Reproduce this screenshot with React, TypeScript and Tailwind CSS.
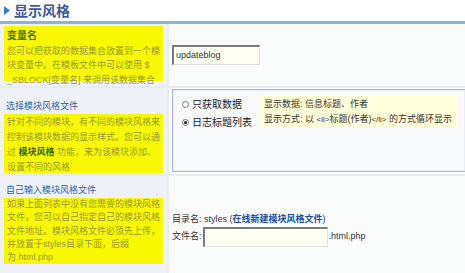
const FONT = '"Liberation Sans", "Noto Sans CJK SC", sans-serif';

export default function App() {
  return (
    <div
      className="h-[273px] w-[465px] overflow-hidden bg-white text-[9px]"
      style={{ fontFamily: FONT }}
    >
      <div className="flex h-[21px] items-center gap-[4px] pl-[4px]">
        <svg viewBox="0 0 6 9" className="h-[9px] w-[6px]" aria-hidden="true">
          <path d="M0 0 L6 4.5 L0 9 Z" fill="#3b7bd0" />
        </svg>
        <span className="text-[14px] font-bold leading-none text-[#3d5a96]">显示风格</span>
      </div>
      <div className="h-[3px] bg-[#88b6d6]" />

      <div className="grid grid-cols-[167px_1fr] gap-[2px] bg-[#e6ecf2]">
        {/* row 1 */}
        <LeftCell className="h-[62px] pt-[2px]">
          <div className="h-[55px] bg-[#f8f800] px-[3px] pt-[3px] leading-[14.5px] text-[#9a9a3e]">
            <p className="text-[10px] font-bold text-[#4f6f00]">变量名</p>
            <p>您可以把获取的数据集合放置到一个模</p>
            <p>块变量中。在模板文件中可以使用 $</p>
            <p>_SBLOCK[变量名] 来调用该数据集合</p>
          </div>
        </LeftCell>
        <RightCell className="flex h-[62px] items-center">
          <div className="flex h-[20px] w-[88px] items-center border-t-2 border-r border-b border-l-2 border-t-[#7a7a7a] border-r-[#e0e0e0] border-b-[#e0e0e0] border-l-[#7a7a7a] bg-[#fffff4] pl-[2px] text-[9px] text-[#333]">
            updateblog
          </div>
        </RightCell>

        {/* row 2 */}
        <LeftCell className="h-[86px]">
          <p className="pt-[12px] pl-[2px] leading-[13px] text-[#2d5fae]">选择模块风格文件</p>
          <div className="mt-[1px] h-[59px] bg-[#f8f800] px-[3px] pt-[1px] leading-[15px] text-[#9a9a3e]">
            <p>针对不同的模块，有不同的模块风格来</p>
            <p>控制该模块数据的显示样式。您可以通</p>
            <p>
              过 <b className="text-[#336600]">模块风格</b> 功能，来为该模块添加、
            </p>
            <p>设置不同的风格</p>
          </div>
        </LeftCell>
        <RightCell className="h-[86px] pt-[1px]">
          <div className="flex h-[83px] gap-[8px] border border-r-0 border-[#a9bacb] bg-[#f7f9fb] pt-[5px] pl-[9px] shadow-[inset_0_0_0_1px_#e6edf3]">
            <div className="flex flex-col gap-[5px] pt-[3px] text-[#222]">
              <Radio label="只获取数据" />
              <Radio label="日志标题列表" checked />
            </div>
            <div className="h-[33px] w-[198px] bg-[#ffffd9] px-[4px] pt-[2px] leading-[15px] text-[#333]">
              <p>显示数据: 信息标题、作者</p>
              <p>
                显示方式: 以 <span className="text-[8px]">&lt;li&gt;</span>标题(作者)
                <span className="text-[8px]">&lt;/li&gt;</span> 的方式循环显示
              </p>
            </div>
          </div>
        </RightCell>

        {/* row 3 */}
        <LeftCell className="h-[97px]">
          <p className="pt-[8px] pl-[2px] leading-[13px] text-[#2d5fae]">自己输入模块风格文件</p>
          <div className="mt-[1px] h-[66px] bg-[#f8f800] px-[3px] leading-[13.3px] text-[#9a9a3e]">
            <p>如果上面列表中没有您需要的模块风格</p>
            <p>文件，您可以自己指定自己的模块风格</p>
            <p>文件地址。模块风格文件必须先上传，</p>
            <p>并放置于styles目录下面，后缀</p>
            <p>为.html.php</p>
          </div>
        </LeftCell>
        <RightCell className="h-[97px] pt-[37px] pl-[3px] text-[#333]">
          <p className="leading-[12px]">
            目录名: styles (
            <a className="font-bold text-[#1a4d9c]">在线新建模块风格文件</a>)
          </p>
          <div className="mt-[2px] flex items-center gap-[1px]">
            <span>文件名:</span>
            <span className="h-[20px] w-[125px] border-t-2 border-r border-b border-l-2 border-t-[#7a7a7a] border-r-[#e0e0e0] border-b-[#e0e0e0] border-l-[#7a7a7a] bg-[#fffff4]" />
            <span>.html.php</span>
          </div>
        </RightCell>
      </div>
    </div>
  );
}

function LeftCell({ children, className = '' }: { children: React.ReactNode; className?: string }) {
  return <div className={`bg-[#eef2f8] px-[4px] ${className}`}>{children}</div>;
}

function RightCell({ children, className = '' }: { children?: React.ReactNode; className?: string }) {
  return <div className={`bg-[#fafcfc] pl-[3px] ${className}`}>{children}</div>;
}

function Radio({ label, checked = false }: { label: string; checked?: boolean }) {
  return (
    <div className="flex items-center gap-[3px] leading-[13px]">
      <span className="flex h-[7px] w-[7px] items-center justify-center rounded-full border border-[#777] bg-white">
        {checked && <span className="h-[3px] w-[3px] rounded-full bg-[#222]" />}
      </span>
      <span className="text-[10px]">{label}</span>
    </div>
  );
}
